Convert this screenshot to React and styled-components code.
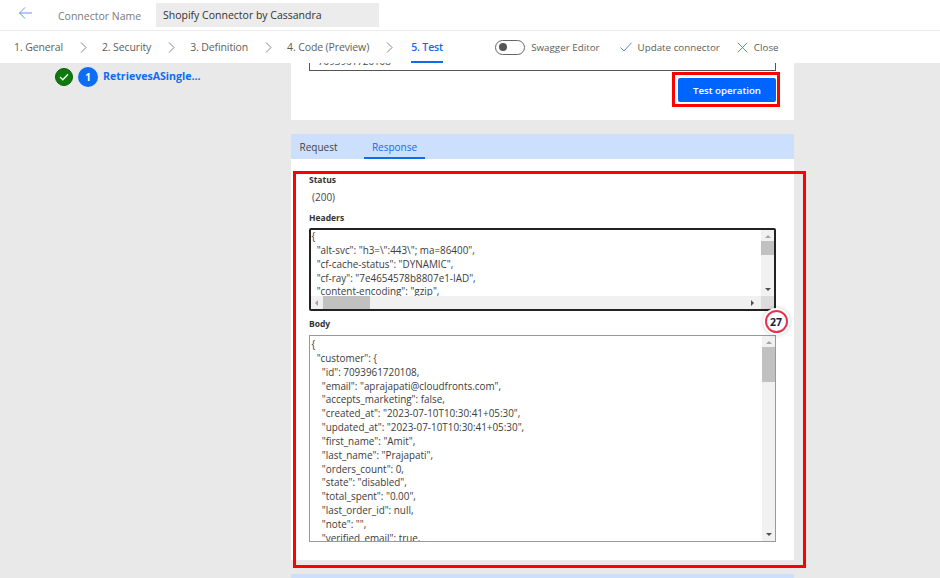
import React from "react";
import styled, { createGlobalStyle } from "styled-components";

const Global = createGlobalStyle`
  html, body { margin: 0; padding: 0; background: #e9e9e9; }
  body { font-family: "Open Sans", "Noto Sans", "Liberation Sans", sans-serif; color: #323130; }
  * { box-sizing: border-box; }
`;
const Page = styled.div`width: 940px; height: 578px; overflow: hidden; display: flex; flex-direction: column; position: relative; background: #e9e9e9;`;
const TopBar = styled.header`height: 31px; flex: none; background: #fff; border-bottom: 1px solid #ececec; display: flex; align-items: center; padding: 0 0 0 18px;`;
const BackButton = styled.span`display: flex; width: 15px; height: 14px; margin-right: 25px; margin-top: -5px;`;
const NameLabel = styled.span`font-size: 10.5px; color: #7a7a7a; width: 98px; margin-top: 1px;`;
const NameField = styled.div`width: 223px; height: 24px; background: #ececec; display: flex; align-items: center; padding-left: 7px; font-size: 10.5px; color: #323130;`;
const Steps = styled.nav`height: 32px; flex: none; background: #fff; display: flex; align-items: center; padding-left: 14px; position: relative;`;
const Step = styled.span`
  height: 32px; display: flex; align-items: center; font-size: 10.5px; letter-spacing: -0.12px; padding-top: 1px;
  margin-left: ${p => (p.$active ? 3 : 0)}px;
  color: ${p => (p.$active ? "#0f6cf0" : "#605e5c")};
  font-weight: ${p => (p.$active ? 600 : 400)};
  border-bottom: 2px solid ${p => (p.$active ? "#0f6cf0" : "transparent")};
`;
const Sep = styled.span`display: flex; width: 7px; margin: 0 15px 0 17px;`;
const Actions = styled.div`display: flex; align-items: center; margin-left: 52px; font-size: 9.8px; color: #605e5c;`;
const Toggle = styled.span`width: 30px; height: 15px; border-radius: 8px; border: 1px solid #666; display: flex; align-items: center; padding-left: 3px; margin-right: 6px;`;
const Knob = styled.span`width: 8px; height: 8px; border-radius: 50%; background: #555;`;
const Action = styled.span`display: flex; align-items: center; gap: 6px; margin-left: ${p => p.$gap}px;`;
const Main = styled.main`flex: 1; display: flex; min-height: 0;`;
const Sidebar = styled.aside`width: 291px; flex: none; display: flex; align-items: flex-start; padding: 4px 0 0 55px;`;
const DoneDot = styled.span`width: 18px; height: 18px; border-radius: 50%; background: #0e7a0d; border: 1px solid #0a5c0a; display: flex; align-items: center; justify-content: center; margin-top: 1px;`;
const NumDot = styled.span`width: 20px; height: 20px; border-radius: 50%; background: #0f6cf5; color: #fff; font-size: 10px; font-weight: 700; display: flex; align-items: center; justify-content: center; margin: 0 5px 0 5px;`;
const OpName = styled.span`font-size: 10.6px; font-weight: 700; color: #0f6cf0; line-height: 18px;`;
const Content = styled.section`width: 503px; flex: none; display: flex; flex-direction: column; position: relative;`;
const UpperCard = styled.div`height: 57px; flex: none; background: #fff; padding: 0 18px 0 18px; margin-bottom: 14px;`;
const ClippedInput = styled.div`height: 8px; border: 1px solid #555; border-top: 0; overflow: hidden; display: flex; align-items: flex-end; padding: 0 0 3px 8px; font-size: 9.8px; line-height: 10px; color: #444; margin-bottom: 1px;`;
const ButtonRow = styled.div`display: flex; justify-content: flex-end; margin-right: -4px;`;
const Highlight = styled.div`border: 3px solid #f00; padding: 3px 1px 2px 3px; display: flex;`;
const TestButton = styled.button`width: 98px; height: 24px; border: 0; border-radius: 2px; background: #0065ff; color: #fff; font: 600 9.7px "Open Sans", sans-serif; padding: 0;`;
const TabBar = styled.div`height: 25px; flex: none; background: #cce0fd; display: flex; padding-left: 9px; align-items: stretch;`;
const Tab = styled.span`
  display: flex; align-items: center; justify-content: center; font-size: 10px; padding-top: 2px;
  margin-left: ${p => p.$gap || 0}px; width: ${p => p.$w}px;
  color: ${p => (p.$active ? "#0f6cf0" : "#444")};
  border-bottom: 2px solid ${p => (p.$active ? "#0f6cf0" : "transparent")};
`;
const ResponsePanel = styled.div`height: 401px; flex: none; background: #fff; padding: 15px 18px 0; display: flex; flex-direction: column;`;
const FieldLabel = styled.div`font-size: 8.5px; font-weight: 700; color: #333; line-height: 12px; margin-top: ${p => p.$mt || 0}px;`;
const StatusValue = styled.div`font-size: 10px; color: #444; padding-left: 3px; margin: 4px 0 8px; line-height: 14px;`;
const CodeBox = styled.div`
  height: ${p => p.$h}px; margin-top: ${p => p.$mt}px; flex: none; display: grid;
  grid-template-columns: 1fr 13px; overflow: hidden; background: #fff;
  grid-template-rows: ${p => (p.$hscroll ? "1fr 13px" : "1fr")};
  border: ${p => (p.$focus ? "2px solid #222" : "1px solid #999")};
  border-radius: ${p => (p.$focus ? "2px" : "0")};
`;
const Code = styled.pre`margin: 0; padding: ${p => (p.$focus ? "0 0 0 .5px" : "2px 0 0 1.5px")}; font: 9.9px/13.85px "Open Sans", sans-serif; color: #3c3c3c; overflow: hidden;`;
const VScroll = styled.div`background: #f1f1f1; display: flex; flex-direction: column; align-items: center; padding-top: 5px; position: relative;`;
const Thumb = styled.div`flex: none; background: #c1c1c1; width: 100%; height: ${p => p.$h}px; margin-top: 3px;`;
const ArrowUp = styled.div`flex: none; width: 0; height: 0; border: 3px solid transparent; border-top: 0; border-bottom: 3px solid #a6a6a6;`;
const ArrowDown = styled.div`flex: none; width: 0; height: 0; border: 3px solid transparent; border-bottom: 0; border-top: 3px solid #505050; margin-top: auto; margin-bottom: 5px;`;
const HScroll = styled.div`background: #f1f1f1; display: flex; align-items: center; padding: 0 7px 0 4px;`;
const ArrowLeft = styled.div`flex: none; width: 0; height: 0; border: 3px solid transparent; border-left: 0; border-right: 3px solid #a0a0a0;`;
const HThumb = styled.div`width: 47px; height: 100%; background: #c1c1c1; margin-left: 5px;`;
const ArrowRight = styled.div`flex: none; width: 0; height: 0; border: 3px solid transparent; border-right: 0; border-left: 3px solid #505050; margin-left: auto;`;
const Corner = styled.div`background: #dcdcdc;`;
const RedFrame = styled.div`position: absolute; left: 2px; top: 108px; width: 513px; height: 397px; border: 3px solid #f00; pointer-events: none;`;
const NextBar = styled.div`height: 4px; flex: none; background: #cce0fd; margin-top: 14px;`;
const Badge = styled.div`
  position: absolute; left: 764.5px; top: 310px; width: 23px; height: 23px; border-radius: 50%;
  background: #fff; border: 2px solid #e8324f; box-shadow: 0 0 0 2px #fff, 0 0 4px 2px rgba(0,0,0,.2);
  display: flex; align-items: center; justify-content: center; font: 700 10.5px "Open Sans", sans-serif; color: #1c1c3a;
`;

const Chevron = () => (
  <svg width="7" height="11" viewBox="0 0 7 11"><path d="M1 .5 6 5.5 1 10.5" fill="none" stroke="#777" strokeWidth=".9" /></svg>
);

const headers = `{
  "alt-svc": "h3=\\":443\\"; ma=86400",
  "cf-cache-status": "DYNAMIC",
  "cf-ray": "7e4654578b8807e1-IAD",
  "content-encoding": "gzip",`;

const body = `{
  "customer": {
    "id": 7093961720108,
    "email": "aprajapati@cloudfronts.com",
    "accepts_marketing": false,
    "created_at": "2023-07-10T10:30:41+05:30",
    "updated_at": "2023-07-10T10:30:41+05:30",
    "first_name": "Amit",
    "last_name": "Prajapati",
    "orders_count": 0,
    "state": "disabled",
    "total_spent": "0.00",
    "last_order_id": null,
    "note": "",
    "verified_email": true,`;

const steps = ["1. General", "2. Security", "3. Definition", "4. Code (Preview)"];

export default function App() {
  return (
    <Page>
      <Global />
      <TopBar>
        <BackButton>
          <svg width="15" height="14" viewBox="0 0 15 14"><path d="M14 7H1.5M7 1.5 1.5 7 7 12.5" fill="none" stroke="#6f8ff0" strokeWidth="1" /></svg>
        </BackButton>
        <NameLabel>Connector Name</NameLabel>
        <NameField>Shopify Connector by Cassandra</NameField>
      </TopBar>
      <Steps>
        {steps.map(s => (
          <React.Fragment key={s}>
            <Step>{s}</Step>
            <Sep><Chevron /></Sep>
          </React.Fragment>
        ))}
        <Step $active>5. Test</Step>
        <Actions>
          <Toggle><Knob /></Toggle>
          Swagger Editor
          <Action $gap={20}>
            <svg width="12" height="10" viewBox="0 0 12 10"><path d="M.5 5.5 4 9 11.5.7" fill="none" stroke="#5f86e0" strokeWidth="1" /></svg>
            Update connector
          </Action>
          <Action $gap={17}>
            <svg width="11" height="11" viewBox="0 0 11 11"><path d="M.7.7 10.3 10.3M10.3.7.7 10.3" fill="none" stroke="#5f86e0" strokeWidth="1" /></svg>
            Close
          </Action>
        </Actions>
      </Steps>
      <Main>
        <Sidebar>
          <DoneDot>
            <svg width="10" height="8" viewBox="0 0 10 8"><path d="M1 4 3.8 6.8 9 1.2" fill="none" stroke="#fff" strokeWidth="1.3" /></svg>
          </DoneDot>
          <NumDot>1</NumDot>
          <OpName>RetrievesASingle...</OpName>
        </Sidebar>
        <Content>
          <UpperCard>
            <ClippedInput>7093961720108</ClippedInput>
            <ButtonRow>
              <Highlight><TestButton>Test operation</TestButton></Highlight>
            </ButtonRow>
          </UpperCard>
          <TabBar>
            <Tab $w={37}>Request</Tab>
            <Tab $w={61} $gap={27} $active>Response</Tab>
          </TabBar>
          <ResponsePanel>
            <FieldLabel>Status</FieldLabel>
            <StatusValue>(200)</StatusValue>
            <FieldLabel>Headers</FieldLabel>
            <CodeBox $h={83} $mt={4} $focus $hscroll>
              <Code $focus>{headers}</Code>
              <VScroll><ArrowUp /><Thumb $h={14} /><ArrowDown /></VScroll>
              <HScroll><ArrowLeft /><HThumb /><ArrowRight /></HScroll>
              <Corner />
            </CodeBox>
            <FieldLabel $mt={7}>Body</FieldLabel>
            <CodeBox $h={207} $mt={5}>
              <Code>{body}</Code>
              <VScroll><ArrowUp /><Thumb $h={35} /><ArrowDown /></VScroll>
            </CodeBox>
          </ResponsePanel>
          <NextBar />
          <RedFrame />
        </Content>
      </Main>
      <Badge>27</Badge>
    </Page>
  );
}
